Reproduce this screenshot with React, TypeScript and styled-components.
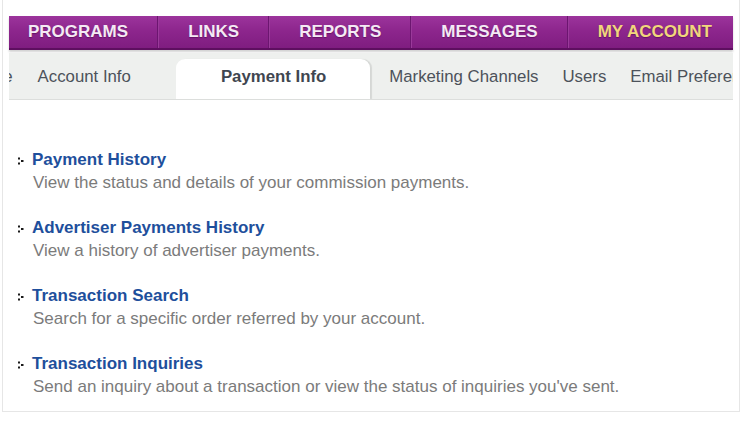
import React from "react";
import styled, { createGlobalStyle } from "styled-components";

const Global = createGlobalStyle`
  html, body { margin: 0; padding: 0; background: #ffffff; }
  body { font-family: "Liberation Sans", Arial, sans-serif; }
`;

const Frame = styled.div`
  margin-left: 2px;
  width: 724px;
  border: 1px solid #e6e6e6;
  border-top: none;
  padding: 16px 6px 13px 6px;
  background: #fff;
`;

const NavBar = styled.nav`
  display: flex;
  height: 32px;
  padding-left: 19px;
  background: linear-gradient(#9c349c 0%, #8d268d 45%, #7f1d80 100%);
  border-bottom: 2px solid #5e0f60;
  box-shadow: 0 2px 2px rgba(0, 0, 0, 0.18);
  overflow: hidden;
`;

const NavItem = styled.a<{ $active?: boolean; $first?: boolean; $last?: boolean }>`
  display: flex;
  align-items: center;
  padding: 0 ${(p) => (p.$last ? "15px" : "29px")} 0 ${(p) => (p.$first ? "0" : "30px")};
  font-size: 17px;
  font-weight: bold;
  color: ${(p) => (p.$active ? "#f1d67c" : "#f4eaf4")};
  text-shadow: 0 1px 1px rgba(60, 0, 60, 0.45);
  border-right: ${(p) => (p.$last ? "none" : "1px solid #6c1670")};
  box-shadow: ${(p) => (p.$last ? "none" : "1px 0 0 #9a3a9a")};
  white-space: nowrap;
  text-decoration: none;
`;

const TabBar = styled.div`
  margin-top: 3px;
  height: 46px;
  background: #eef0ee;
  border-bottom: 1px solid #dcdedc;
  display: flex;
  align-items: flex-end;
  overflow: hidden;
`;

const Tab = styled.a<{ $active?: boolean }>`
  display: flex;
  align-items: center;
  box-sizing: border-box;
  height: ${(p) => (p.$active ? "40px" : "46px")};
  padding: ${(p) => (p.$active ? "0 44px 0 45px" : "0 12px")};
  margin: ${(p) => (p.$active ? "0 7px 0 33px" : "0")};
  font-size: 16.8px;
  font-weight: ${(p) => (p.$active ? "bold" : "normal")};
  color: ${(p) => (p.$active ? "#3f4650" : "#4c525a")};
  background: ${(p) => (p.$active ? "#ffffff" : "transparent")};
  border-radius: ${(p) => (p.$active ? "9px 9px 0 0" : "0")};
  box-shadow: ${(p) => (p.$active ? "2px 0 1px rgba(0,0,0,0.10)" : "none")};
  white-space: nowrap;
  flex-shrink: 0;
  line-height: 1;
  & > span {
    position: relative;
    top: ${(p) => (p.$active ? "-2px" : "1px")};
  }
`;

const Clipped = styled(Tab)`
  margin-left: -56px;
  padding-right: 13px;
`;

const Content = styled.div`
  padding: 48px 0 0 9px;
  display: flex;
  flex-direction: column;
  gap: 22px;
`;

const Item = styled.div`
  display: flex;
  flex-direction: column;
`;

const LinkRow = styled.div`
  display: flex;
  align-items: center;
  gap: 8px;
  height: 23px;
`;

const ItemLink = styled.a`
  font-size: 17px;
  font-weight: bold;
  color: #1e4f9c;
  text-decoration: none;
  line-height: 23px;
`;

const Desc = styled.div`
  margin-left: 15px;
  font-size: 17px;
  line-height: 23px;
  color: #7b7b7b;
`;

const Bullet = () => (
  <svg width="6" height="8" viewBox="0 0 6 8" style={{ marginTop: 2 }}>
    <rect x="0" y="0.5" width="2" height="2" fill="#1a1a1a" />
    <rect x="3" y="3" width="2.5" height="2" fill="#1a1a1a" />
    <rect x="0" y="5.5" width="2" height="2" fill="#1a1a1a" />
  </svg>
);

const navItems = ["PROGRAMS", "LINKS", "REPORTS", "MESSAGES", "MY ACCOUNT"];

const items = [
  ["Payment History", "View the status and details of your commission payments."],
  ["Advertiser Payments History", "View a history of advertiser payments."],
  ["Transaction Search", "Search for a specific order referred by your account."],
  [
    "Transaction Inquiries",
    "Send an inquiry about a transaction or view the status of inquiries you've sent.",
  ],
];

export default function App() {
  return (
    <>
      <Global />
      <Frame>
        <NavBar>
          {navItems.map((n, i) => (
            <NavItem
              key={n}
              $first={i === 0}
              $last={i === navItems.length - 1}
              $active={n === "MY ACCOUNT"}
            >
              {n}
            </NavItem>
          ))}
        </NavBar>
        <TabBar>
          <Clipped>
            <span>Profile</span>
          </Clipped>
          <Tab>
            <span>Account Info</span>
          </Tab>
          <Tab $active>
            <span>Payment Info</span>
          </Tab>
          <Tab>
            <span>Marketing Channels</span>
          </Tab>
          <Tab>
            <span>Users</span>
          </Tab>
          <Tab>
            <span>Email Preferences</span>
          </Tab>
        </TabBar>
        <Content>
          {items.map(([title, desc]) => (
            <Item key={title}>
              <LinkRow>
                <Bullet />
                <ItemLink>{title}</ItemLink>
              </LinkRow>
              <Desc>{desc}</Desc>
            </Item>
          ))}
        </Content>
      </Frame>
    </>
  );
}
